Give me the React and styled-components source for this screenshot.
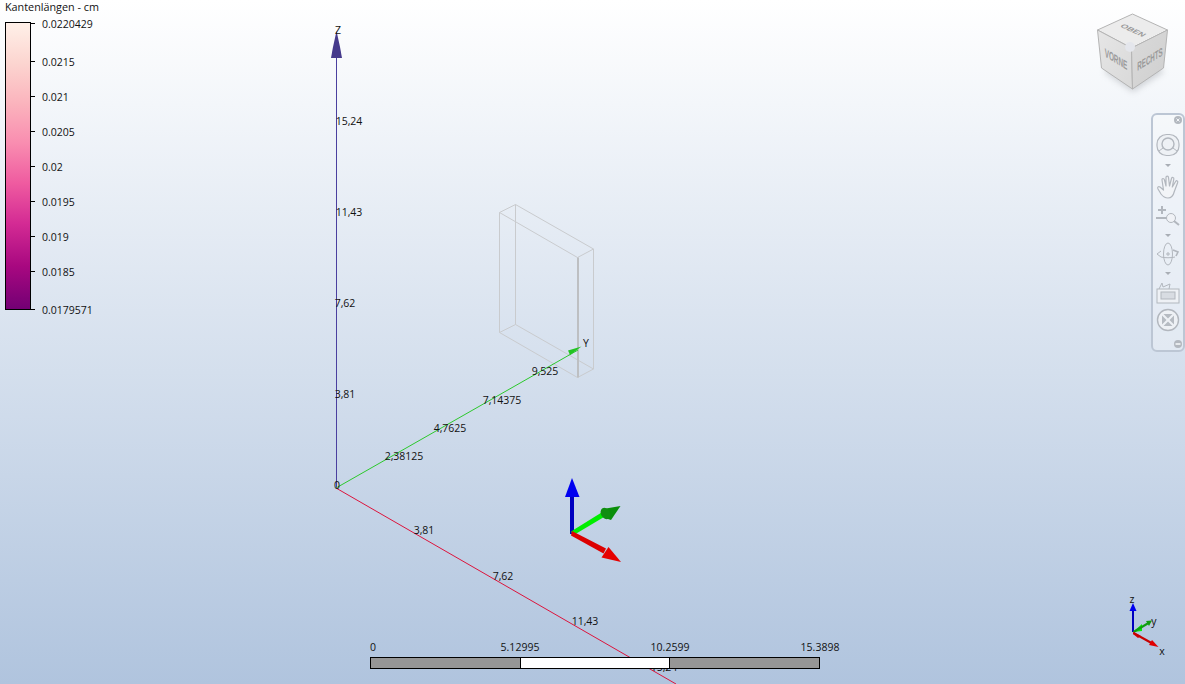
import React from "react"
import styled, { createGlobalStyle } from "styled-components"

const GlobalStyle = createGlobalStyle`
  html, body {
    margin: 0;
    padding: 0;
    overflow: hidden;
  }
  body {
    font-family: "Open Sans", "Noto Sans", sans-serif;
    font-size: 10.5px;
    color: #111;
  }
`

const Viewport = styled.div`
  position: relative;
  width: 1185px;
  height: 684px;
  overflow: hidden;
  background: linear-gradient(180deg, #ffffff 0%, #b0c4de 100%);
`

const Scene = styled.svg`
  position: absolute;
  inset: 0;
  width: 100%;
  height: 100%;

  text {
    font-family: "Open Sans", "Noto Sans", sans-serif;
    font-size: 10.5px;
    fill: #111;
    text-anchor: middle;
    dominant-baseline: central;
  }
`

const Legend = styled.div`
  position: absolute;
  left: 5px;
  top: 0;
  width: 120px;
`

const LegendTitle = styled.div`
  height: 14px;
  line-height: 14px;
  font-size: 10.8px;
  white-space: nowrap;
`

const LegendBody = styled.div`
  position: relative;
  height: 296px;
`

const ColorBar = styled.div`
  position: absolute;
  left: 0;
  top: 8px;
  width: 24px;
  height: 286px;
  border: 1px solid #000;
  background: linear-gradient(
    180deg,
    #fff0e8 0%,
    #fcd5d0 14%,
    #fbb4bd 28%,
    #f98db0 42%,
    #ef5ba0 56%,
    #d42b94 70%,
    #a80880 85%,
    #730074 100%
  );
`

const Tick = styled.div`
  position: absolute;
  left: 26px;
  display: flex;
  align-items: center;
  gap: 7px;
  height: 14px;
  margin-top: -7px;
  white-space: nowrap;

  &::before {
    content: "";
    position: relative;
    top: -1px;
    width: 4px;
    height: 1px;
    background: #000;
  }
`

const CubeWrap = styled.svg`
  position: absolute;
  right: 0;
  top: 0;
  width: 100px;
  height: 105px;

  text {
    font-family: "Liberation Sans", sans-serif;
    font-size: 10px;
    font-weight: bold;
    fill: #9a9a9a;
    text-anchor: middle;
    dominant-baseline: central;
  }
`

const NavBar = styled.div`
  position: absolute;
  left: 1151px;
  top: 113px;
  width: 34px;
  height: 239px;
  box-sizing: border-box;
  padding-top: 16px;
  display: flex;
  flex-direction: column;
  align-items: center;
  border: 2px solid #bcc6d4;
  border-radius: 6px;
  background: rgba(255, 255, 255, 0.28);
  color: #b2b7be;
`

const NavClose = styled.svg`
  position: absolute;
  right: 0;
  top: 0;
  width: 10px;
  height: 10px;
`

const NavItem = styled.div`
  flex: none;
  height: ${p => p.$h}px;
  width: 100%;
  display: flex;
  align-items: center;
  justify-content: ${p => (p.$end ? "flex-end" : "center")};
`

const Caret = styled.span`
  width: 0;
  height: 0;
  border-left: 3px solid transparent;
  border-right: 3px solid transparent;
  border-top: 3px solid #a9aeb5;
`

const Ruler = styled.div`
  position: absolute;
  left: 370px;
  top: 640px;
  width: 450px;
`

const RulerLabels = styled.div`
  display: flex;
  justify-content: space-between;
  height: 14px;
  margin-bottom: 3px;
`

const RulerLabel = styled.span`
  width: 0;
  display: flex;
  justify-content: ${p => (p.$start ? "flex-start" : "center")};
  white-space: nowrap;
  line-height: 14px;
`

const RulerBar = styled.div`
  display: flex;
  height: 10px;
  border: 1px solid #000;
`

const RulerSegment = styled.div`
  flex: 1;
  background: ${p => (p.$light ? "#ffffff" : "#969696")};
  & + & {
    border-left: 1px solid #000;
  }
`

const legendTicks = [0.0220429, 0.0215, 0.021, 0.0205, 0.02, 0.0195, 0.019, 0.0185, 0.0179571]
const legendY = v => 10 + (0.0220429 - v) * 70000

const sceneLabels = [
  ["Z", 338, 30],
  ["15,24", 349, 121],
  ["11,43", 349, 212],
  ["7,62", 345, 303],
  ["3,81", 345, 394],
  ["0", 337, 485],
  ["2,38125", 404, 456],
  ["4,7625", 450, 428],
  ["7,14375", 502, 400],
  ["9,525", 545, 371],
  ["Y", 586, 343],
  ["3,81", 424, 530],
  ["7,62", 503, 576],
  ["11,43", 585, 621],
  ["15,24", 664, 667],
  ["z", 1132, 599],
  ["y", 1154, 621],
  ["x", 1162, 651],
]

function Box() {
  return (
    <g stroke="#c9cbce" strokeWidth="1" fill="none">
      <path d="M499.5 212.5L515.5 204.5L593.5 249L577.5 257.5Z" />
      <path d="M499.5 332.5L515.5 324.5L593.5 369L577.5 377.5Z" />
      <path d="M499.5 212.5V332.5M515.5 204.5V324.5M593.5 249V369" />
      <path d="M578 257.5V377.5" strokeWidth="2" stroke="#bdbfc2" />
    </g>
  )
}

function Axes() {
  return (
    <g>
      <path d="M336.5 488V50" stroke="#4a3f9f" strokeWidth="1" />
      <path d="M336.5 31L340 47L342 58H331L333 47Z" fill="#463a8c" />
      <path d="M336 488L578 350" stroke="#2cc82c" strokeWidth="1" />
      <path d="M581.5 346.5L568 350.5L570 355Z" fill="#22c422" />
      <path d="M336 488L676 684" stroke="#dc143c" strokeWidth="1" />
    </g>
  )
}

function BigTriad() {
  return (
    <g>
      <path d="M570 496H574V534H570Z" fill="#0000c0" />
      <path d="M572 478L579.5 497H565Z" fill="#0000f0" />
      <path d="M571 531.5L604 511L606.5 515.5L573 535.5Z" fill="#00ee00" />
      <path d="M620.5 506L603 509L605 518L611 520Z" fill="#0a8f0a" />
      <ellipse cx="605.5" cy="513.5" rx="4.5" ry="6" fill="#108e10" transform="rotate(-30 605.5 513.5)" />
      <path d="M572 531L606 548.5L603.5 553.5L571 535.5Z" fill="#dc0000" />
      <path d="M621 562L608.5 547L601.5 557.5Z" fill="#e60000" />
    </g>
  )
}

function SmallTriad() {
  return (
    <g>
      <path d="M1132 610H1134V632H1132Z" fill="#0000c0" />
      <path d="M1133 603L1136.5 611H1129.5Z" fill="#0000f0" />
      <path d="M1133 632L1142 624V631Z" fill="#00ee00" />
      <path d="M1133 631L1148 622L1149 624L1134 633Z" fill="#109c10" />
      <path d="M1152 620.5L1146 621L1149 626Z" fill="#109c10" />
      <path d="M1133 632L1141 636L1138 638L1133 634Z" fill="#dd0000" />
      <path d="M1134 632L1152 642L1151 644L1133 634Z" fill="#c80000" />
      <path d="M1158.5 647L1152 640L1149 645Z" fill="#e00000" />
    </g>
  )
}

function ViewCube() {
  return (
    <CubeWrap viewBox="1085 0 100 105">
      <defs>
        <filter id="cubeBlur" x="-30%" y="-30%" width="160%" height="160%">
          <feGaussianBlur stdDeviation="3" />
        </filter>
        <linearGradient id="leftFace" x1="0" y1="0" x2="1" y2="1">
          <stop offset="0" stopColor="#e6e6e6" />
          <stop offset="1" stopColor="#d9d9d9" />
        </linearGradient>
        <linearGradient id="rightFace" x1="0" y1="0" x2="1" y2="1">
          <stop offset="0" stopColor="#dadada" />
          <stop offset="1" stopColor="#cfcfcf" />
        </linearGradient>
      </defs>
      <path d="M1104 72L1133 92L1164 72L1150 58H1118Z" fill="#a0a4aa" opacity="0.45" filter="url(#cubeBlur)" />
      <path d="M1132.5 14L1167.5 30L1131.5 48L1097.5 30Z" fill="#ececec" stroke="#b4b4b4" />
      <path d="M1097.5 30L1131.5 48L1132.5 89L1101.5 68Z" fill="url(#leftFace)" stroke="#b4b4b4" />
      <path d="M1167.5 30L1131.5 48L1132.5 89L1163.5 68Z" fill="url(#rightFace)" stroke="#b4b4b4" />
      <circle cx="1130" cy="47" r="5" fill="#e4e6ec" />
      <text transform="matrix(0.8 0.36 -0.62 0.42 1133 30.5)">OBEN</text>
      <text transform="matrix(0.64 0.38 0 1.2 1116 59)">VORNE</text>
      <text transform="matrix(0.62 -0.38 0 1.2 1150 59)">RECHTS</text>
    </CubeWrap>
  )
}

function Navigation() {
  return (
    <NavBar>
      <NavClose viewBox="0 0 10 10">
        <circle cx="5" cy="5" r="4" fill="#b3b8bf" />
        <path d="M3.5 3.5L6.5 6.5M6.5 3.5L3.5 6.5" stroke="#f3f5f8" strokeWidth="1" />
      </NavClose>
      <NavItem $h={28}>
        <svg width="24" height="24" viewBox="0 0 24 24" fill="none" stroke="currentColor">
          <rect x="1" y="1.5" width="22" height="21" rx="9.5" fill="#eef1f5" strokeWidth="1.2" />
          <circle cx="12" cy="11" r="6" strokeWidth="1.4" />
          <path d="M3 18L7 15M21 18L17 15" strokeWidth="1" />
        </svg>
      </NavItem>
      <NavItem $h={12}>
        <Caret />
      </NavItem>
      <NavItem $h={32}>
        <svg width="26" height="26" viewBox="0 0 26 26" fill="#f2f4f7" stroke="currentColor" strokeWidth="1.2" strokeLinejoin="round">
          <path d="M3 15C2 13 3.5 12 5 13L8.5 16L7 6C6.8 4 9 4 9.5 6L11 12L11 3.5C11 1.6 13.5 1.6 13.5 3.5L14.5 12L16.5 4.5C17 2.8 19.2 3.4 18.8 5.2L17.3 13L20.6 7.5C21.6 6 23.4 7 22.6 8.8L19.5 17C18.5 21 17 24 13 24C9 24 7.5 22 6 20Z" />
        </svg>
      </NavItem>
      <NavItem $h={24}>
        <svg width="26" height="22" viewBox="0 0 26 22" fill="none" stroke="currentColor">
          <path d="M7 2V10M3 6H11M1 14H13" strokeWidth="2" />
          <circle cx="16" cy="14" r="4.5" fill="#f0f2f6" strokeWidth="1" />
          <path d="M19 17L24 21" strokeWidth="2" />
        </svg>
      </NavItem>
      <NavItem $h={16}>
        <Caret />
      </NavItem>
      <NavItem $h={22}>
        <svg width="24" height="24" viewBox="0 0 24 24" fill="none" stroke="currentColor">
          <ellipse cx="12" cy="12" rx="4.5" ry="11" strokeWidth="1" />
          <path d="M5 9L1 12L5 15C8 16 16 16 19 15" strokeWidth="1" />
          <path d="M17 8L22 10L20 14" strokeWidth="1.6" />
          <path d="M12 10V14M10 12H14" strokeWidth="1" />
        </svg>
      </NavItem>
      <NavItem $h={16}>
        <Caret />
      </NavItem>
      <NavItem $h={22}>
        <svg width="24" height="24" viewBox="0 0 24 24" fill="none" stroke="currentColor">
          <rect x="1" y="9" width="22" height="14" fill="#eef1f5" strokeWidth="1" />
          <rect x="5" y="12" width="14" height="7" fill="#d8dce2" strokeWidth="1" />
          <path d="M3 9L6 3L7 7L14 4L13 9" strokeWidth="1" />
        </svg>
      </NavItem>
      <NavItem $h={34}>
        <svg width="24" height="24" viewBox="0 0 24 24" fill="none" stroke="currentColor">
          <circle cx="12" cy="12" r="10.5" fill="#eef1f5" strokeWidth="1.4" />
          <path d="M7.5 6H16.5L12 10.5ZM7.5 18H16.5L12 13.5ZM6 7.5V16.5L10.5 12ZM18 7.5V16.5L13.5 12Z" fill="#b6bbc2" stroke="none" />
        </svg>
      </NavItem>
      <NavItem $h={14} $end>
        <svg width="10" height="10" viewBox="0 0 10 10">
          <circle cx="5" cy="5" r="4" fill="#b3b8bf" />
          <path d="M2.5 4.2H7.5V5.8H2.5Z" fill="#f3f5f8" />
        </svg>
      </NavItem>
    </NavBar>
  )
}

export default function App() {
  return (
    <Viewport>
      <GlobalStyle />
      <Scene viewBox="0 0 1185 684">
        <Box />
        <Axes />
        <BigTriad />
        <SmallTriad />
        {sceneLabels.map(([label, x, y]) => (
          <text key={`${label}-${x}`} x={x} y={y}>
            {label}
          </text>
        ))}
      </Scene>

      <Legend>
        <LegendTitle>Kantenlängen - cm</LegendTitle>
        <LegendBody>
          <ColorBar />
          {legendTicks.map(v => (
            <Tick key={v} style={{ top: legendY(v) }}>
              {v}
            </Tick>
          ))}
        </LegendBody>
      </Legend>

      <ViewCube />
      <Navigation />

      <Ruler>
        <RulerLabels>
          <RulerLabel $start>0</RulerLabel>
          <RulerLabel>5.12995</RulerLabel>
          <RulerLabel>10.2599</RulerLabel>
          <RulerLabel>15.3898</RulerLabel>
        </RulerLabels>
        <RulerBar>
          <RulerSegment />
          <RulerSegment $light />
          <RulerSegment />
        </RulerBar>
      </Ruler>
    </Viewport>
  )
}
